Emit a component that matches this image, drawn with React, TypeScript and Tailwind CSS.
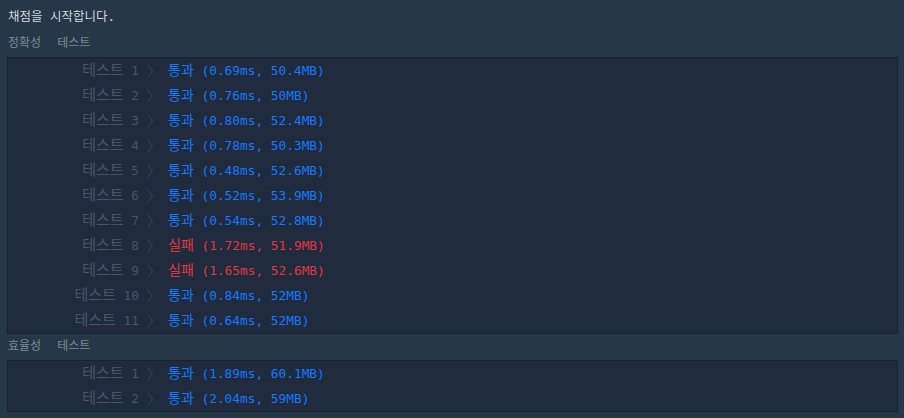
import React from "react";

type Row = { n: number; ok: boolean; detail: string };

const accuracy: Row[] = [
  { n: 1, ok: true, detail: "(0.69ms, 50.4MB)" },
  { n: 2, ok: true, detail: "(0.76ms, 50MB)" },
  { n: 3, ok: true, detail: "(0.80ms, 52.4MB)" },
  { n: 4, ok: true, detail: "(0.78ms, 50.3MB)" },
  { n: 5, ok: true, detail: "(0.48ms, 52.6MB)" },
  { n: 6, ok: true, detail: "(0.52ms, 53.9MB)" },
  { n: 7, ok: true, detail: "(0.54ms, 52.8MB)" },
  { n: 8, ok: false, detail: "(1.72ms, 51.9MB)" },
  { n: 9, ok: false, detail: "(1.65ms, 52.6MB)" },
  { n: 10, ok: true, detail: "(0.84ms, 52MB)" },
  { n: 11, ok: true, detail: "(0.64ms, 52MB)" },
];

const efficiency: Row[] = [
  { n: 1, ok: true, detail: "(1.89ms, 60.1MB)" },
  { n: 2, ok: true, detail: "(2.04ms, 59MB)" },
];

const font = "font-['DejaVu_Sans_Mono','Noto_Sans_CJK_KR',monospace]";

function Chevron() {
  return (
    <svg width="8" height="16" viewBox="0 0 8 16" className="shrink-0">
      <path d="M1.5 1.5 L6.5 8 L1.5 14.5" fill="none" stroke="#334152" strokeWidth="1.2" />
    </svg>
  );
}

function ResultRow({ row }: { row: Row }) {
  const color = row.ok ? "text-[#1479ff]" : "text-[#e0363f]";
  return (
    <div className="flex items-center h-[25px] leading-[25px] whitespace-pre text-[12.8px]">
      <span className="w-[131px] text-right text-[#45556a]">
        <span className="text-[15px]">테스트</span> {row.n}
      </span>
      <span className="ml-[7px] mr-[14px] flex items-center">
        <Chevron />
      </span>
      <span className={color}>
        <span className="text-[14px]">{row.ok ? "통과" : "실패"}</span> {row.detail}
      </span>
    </div>
  );
}

function Section({ title, rows }: { title: string; rows: Row[] }) {
  return (
    <div className="flex flex-col">
      <div className="h-[20px] leading-[20px] pl-[1px] text-[12px] text-[#7a8a99] whitespace-pre">
        {title}
        <span className="ml-[16px]">테스트</span>
      </div>
      <div className="mt-[4px] border border-[#182231] bg-[#202b3d]">
        {rows.map((r) => (
          <ResultRow key={r.n} row={r} />
        ))}
      </div>
    </div>
  );
}

export default function App() {
  return (
    <div className={`w-[904px] h-[418px] bg-[#263747] pl-[7px] pr-[6px] ${font}`}>
      <div className="pt-[7px] h-[27px] leading-[20px] pl-[1px] text-[12.5px] text-[#d2d9df]">채점을 시작합니다.</div>
      <div className="mt-[6px]">
        <Section title="정확성" rows={accuracy} />
      </div>
      <div className="mt-[2px]">
        <Section title="효율성" rows={efficiency} />
      </div>
    </div>
  );
}
